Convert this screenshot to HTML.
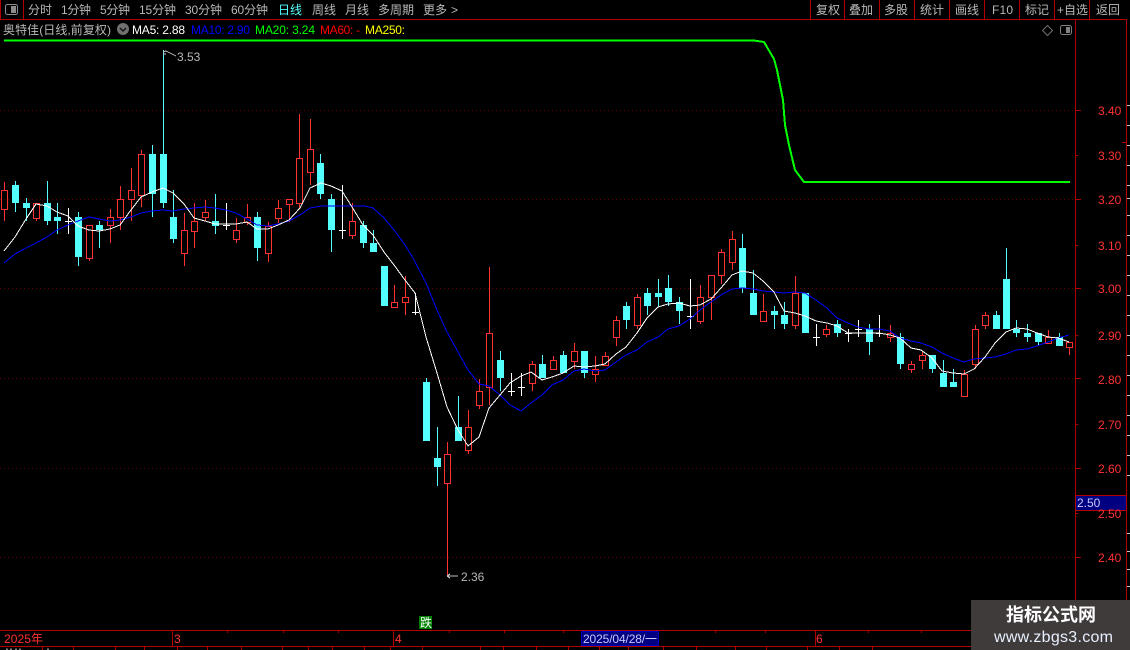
<!DOCTYPE html>
<html lang="zh"><head><meta charset="utf-8"><title>奥特佳</title>
<style>
html,body{margin:0;padding:0;background:#000;width:1130px;height:650px;overflow:hidden}
svg{display:block;position:absolute;left:0;top:0}
text{font:12px "Liberation Sans","Noto Sans CJK SC",sans-serif}
.n{fill:#b8b8b8}.l{fill:#ff3232}
</style></head><body>
<svg width="1130" height="650" viewBox="0 0 1130 650" xmlns="http://www.w3.org/2000/svg">
<rect width="1130" height="650" fill="#000"/>
<g shape-rendering="crispEdges" fill="none">
<path stroke="#640000" stroke-dasharray="1 3" d="M0 110.500H1075M0 199.500H1075M0 288.500H1075M0 378.500H1075M0 468.500H1075M0 557.500H1075"/>
<path stroke="#b00000" d="M0 19.500H1126M.5 0V19M23.500 0V19M810.500 0V19M844.500 0V19M879.500 0V19M914.500 0V19M949.500 0V19M984.500 0V19M1019.500 0V19M1054.500 0V19M1089.500 0V19M1075.500 19V630M1126.500 19V630M0 630.500H1130M0 646.500H1130M172.500 630V646M393.500 630V646M815.500 630V646
M1075 110.500h6M1075 155.500h3M1075 199.500h6M1075 245.500h3M1075 288.500h6M1075 335.500h3M1075 378.500h6M1075 424.500h3M1075 468.500h6M1075 513.500h3M1075 557.500h6M1122 142.500h4
M227.500 630v3M283.500 630v3M338.500 630v3M449.500 630v3M504.500 630v3M563.500 630v3M715.500 630v3M765.500 630v3M868.500 630v3M921.500 630v3
M42.500 647v3M73.500 647v3M115.500 647v3M144.500 647v3M177.500 647v3M207.500 647v3M241.500 647v3M282.500 647v3M308.500 647v3M332.500 647v3M364.500 647v3M390.500 647v3M422.500 647v3M480.500 647v3M503.500 647v3M536.500 647v3M568.500 647v3M599.500 647v3M628.500 647v3M663.500 647v3M696.500 647v3M735.500 647v3M766.500 647v3M807.500 647v3M839.500 647v3M872.500 647v3"/>
<path stroke="#c8c8c8" d="M1127 105.500h3M1127 125.500h3M1127 145.500h3M1127 165.500h3M1127 185.500h3M1127 198.500h3M1127 215.500h3M1127 235.500h3M1127 255.500h3M1127 275.500h3M1127 295.500h3M1127 315.500h3M1127 335.500h3M1127 355.500h3M1127 375.500h3M1127 395.500h3M1127 415.500h3M1127 435.500h3M1127 455.500h3M1127 475.500h3M1127 533.500h3M1127 551.500h3M1127 569.500h3M1127 586.500h3"/>
<path stroke="#ff3232" d="M4.500 182V190M4.500 209V221M1.500 190.500h6v19h-6z
M36.500 203V203M36.500 218V221M33.500 203.500h6v15h-6z
M110.500 209V217M110.500 225V243M107.500 217.500h6v8h-6z
M120.500 186V199M120.500 217V230M117.500 199.500h6v18h-6z
M131.500 168V190M131.500 199V221M128.500 190.500h6v9h-6z
M141.500 150V154M141.500 195V207M138.500 154.500h6v41h-6z
M89.500 258V261M86.500 225.500h6v33h-6z
M184.500 213V230M184.500 253V266M181.500 230.500h6v23h-6z
M194.500 203V221M194.500 231V248M191.500 221.500h6v10h-6z
M205.500 200V212M205.500 217V221M202.500 212.500h6v5h-6z
M236.500 218V230M236.500 239V243M233.500 230.500h6v9h-6z
M247.500 204V217M247.500 222V225M244.500 217.500h6v5h-6z
M268.500 222V226M268.500 253V262M265.500 226.500h6v27h-6z
M278.500 200V208M278.500 218V223M275.500 208.500h6v10h-6z
M289.500 204V222M286.500 199.500h6v5h-6z
M299.500 114V158M299.500 203V208M296.500 158.500h6v45h-6z
M310.500 119V149M310.500 172V185M307.500 149.500h6v23h-6z
M352.500 203V221M352.500 235V239M349.500 221.500h6v14h-6z
M394.500 285V302M391.500 302.500h6v5h-6z
M405.500 276V297M405.500 302V315M402.500 297.500h6v5h-6z
M447.500 442V454M447.500 483V576M444.500 454.500h6v29h-6z
M468.500 410V427M468.500 450V454M465.500 427.500h6v23h-6z
M479.500 379V391M479.500 405V409M476.500 391.500h6v14h-6z
M489.500 267V333M489.500 387V405M486.500 333.500h6v54h-6z
M532.500 361V364M532.500 383V391M529.500 364.500h6v19h-6z
M553.500 356V360M550.500 360.500h6v9h-6z
M574.500 343V351M574.500 361V369M571.500 351.500h6v10h-6z
M595.500 356V369M595.500 374V382M592.500 369.500h6v5h-6z
M605.500 352V356M602.500 356.500h6v9h-6z
M616.500 316V320M616.500 337V346M613.500 320.500h6v17h-6z
M637.500 294V297M637.500 325V329M634.500 297.500h6v28h-6z
M700.500 285V297M700.500 321V324M697.500 297.500h6v24h-6z
M711.500 297V320M708.500 275.500h6v22h-6z
M721.500 249V252M721.500 275V284M718.500 252.500h6v23h-6z
M732.500 231V239M732.500 262V270M729.500 239.500h6v23h-6z
M763.500 294V311M760.500 311.500h6v10h-6z
M795.500 276V293M795.500 325V329M792.500 293.500h6v32h-6z
M826.500 325V329M826.500 334V337M823.500 329.500h6v5h-6z
M890.500 325V333M890.500 337V342M887.500 333.500h6v4h-6z
M911.500 361V364M911.500 369V373M908.500 364.500h6v5h-6z
M922.500 351V355M922.500 360V369M919.500 355.500h6v5h-6z
M964.500 370V374M961.500 374.500h6v22h-6z
M975.500 325V329M975.500 364V369M972.500 329.500h6v35h-6z
M985.500 312V315M985.500 325V329M982.500 315.500h6v10h-6z
M1048.500 330V337M1045.500 337.500h6v6h-6z
M1069.500 347V355M1066.500 342.500h6v5h-6z"/>
<path stroke="#54ffff" d="M15.500 181V212M26.500 198V221M47.500 181V225M57.500 203V234M78.500 212V266M99.500 221V248M152.500 145V217M163.500 50V208M173.500 190V243M215.500 194V234M257.500 212V261M320.500 154V199M331.500 194V252M363.500 221V248M373.500 230V252M426.500 378V441M437.500 427V486M458.500 396V441M500.500 351V391M542.500 355V378M563.500 351V373M584.500 351V378M626.500 302V329M647.500 288V315M658.500 279V306M668.500 275V306M679.500 297V324M742.500 234V293M753.500 270V315M774.500 306V329M784.500 302V329M805.500 293V333M837.500 320V337M869.500 324V355M900.500 333V369M932.500 355V373M943.500 360V387M953.500 369V387M996.500 311V329M1006.500 248V329M1016.500 320V337M1027.500 324V342M1038.500 333V346M1059.500 333V346"/>
<path stroke="#54ffff" stroke-width="7" d="M15.500 185V203M26.500 203V208M47.500 203V221M57.500 217V221M78.500 217V257M99.500 225V230M152.500 154V194M163.500 154V203M173.500 217V239M215.500 221V226M257.500 217V248M320.500 163V194M331.500 199V230M363.500 225V243M373.500 243V252M384.500 266V306M426.500 382V441M437.500 458V467M458.500 427V441M500.500 360V378M542.500 364V378M563.500 355V373M584.500 351V373M626.500 306V320M647.500 293V306M658.500 293V297M668.500 288V302M679.500 302V311M742.500 248V288M753.500 293V315M774.500 311V315M784.500 315V324M805.500 293V333M837.500 324V333M869.500 329V342M900.500 337V364M932.500 355V369M943.500 373V387M953.500 382V387M996.500 315V329M1006.500 279V329M1016.500 329V333M1027.500 333V337M1038.500 333V342M1059.500 337V346"/>
<path stroke="#fff" d="M68.500 208V234M65 221.500h7M226.500 203V230M223 225.500h7M342.500 185V239M339 230.500h7M415.500 293V315M412 312.500h7M511.500 373V396M508 391.500h7M521.500 373V396M518 387.500h7M690.500 279V329M687 316.500h7M816.500 324V346M813 337.500h7M848.500 329V342M845 333.500h7M858.500 320V337M855 329.500h7M879.500 315V337M876 333.500h7"/>
<path stroke="#00f" d="M4 263L15 254L26 248L36 243L47 237L57 230L68 225L78 221L89 217L99 219L110 221L120 220L131 217L141 213L152 211L163 210L173 211L184 209L194 208L205 207L215 208L226 210L236 213L247 219L257 225L268 226L278 224L289 221L300 215L310 208L321 206L331 206L342 206L352 206L365 206L373 208L384 218L394 230L405 245L413 258L426 283L437 310L447 332L458 352L468 370L479 384L489 386L500 395L510 405L521 411L531 403L542 395L552 385L563 380L574 371L584 369L595 371L605 370L616 362L626 355L637 350L647 342L658 337L668 329L679 326L690 319L700 310L711 302L721 295L732 289L742 288L753 289L763 291L774 292L784 293L795 292L805 293L816 300L827 308L837 318L848 323L858 327L869 329L879 329L890 331L900 338L911 341L921 343L932 347L942 353L953 358L964 362L974 359L985 358L995 357L1006 354L1016 350L1027 349L1037 346L1048 342L1058 338L1069 335"/>
<path stroke="#fff" d="M4 251L15 237L26 219L36 204L47 206L57 212L68 216L78 226L89 230L99 231L110 229L120 225L131 210L141 197L152 192L163 188L173 193L184 204L194 218L205 221L215 224L226 224L236 224L247 222L257 229L268 229L278 225L289 220L300 208L310 188L321 183L331 186L342 191L352 207L363 225L373 235L384 252L394 265L405 280L415 293L426 337L437 373L447 407L458 430L468 446L479 437L489 408L500 395L510 383L521 376L531 372L542 380L552 377L563 373L574 366L584 367L595 366L605 364L616 354L626 347L637 333L647 318L658 307L668 304L679 303L690 306L700 305L711 299L721 288L732 275L742 271L753 273L763 281L774 292L784 311L795 313L805 316L816 321L827 323L837 326L848 333L858 333L869 333L879 333L890 335L900 338L911 348L921 350L932 358L942 371L953 373L964 374L974 369L985 357L995 343L1006 332L1016 328L1027 329L1037 333L1048 337L1058 338L1069 342"/>
<path stroke="#0f0" stroke-width="2" d="M4 40.500H754L764 42L774 59L777 70L783 100L785 125L789 145L795 170L804 182H1070"/>
<path stroke="#c0c0c0" d="M163 52l3-1 10 5M163 54h3M447 576h11M447 576l3-2M447 576l3 2"/>
<rect x="581.500" y="631.500" width="77" height="14" fill="#000080" stroke="#0000c0"/>
<rect x="1076" y="496" width="50" height="14.500" fill="#000080"/>
<path stroke="#b00000" d="M1076 495.500H1126M1076 510.500H1126"/>
<rect x="419" y="616" width="13" height="13" fill="#008000"/>
<path stroke="#fff" d="M7 648.500v2M11 648.500v2M16 648.500v2M20 648.500v2M48 648.500v2"/>
</g>

<g fill="none" stroke="#8c8c8c">
<rect x="5.500" y="4.500" width="12" height="10" rx="2"/>
<rect x="11" y="6" width="5" height="7" fill="#8c8c8c" stroke="none"/>
<path d="M1047.500 25.500l5 5-5 5-5-5z" stroke="#707070"/>
<rect x="1060.500" y="25.500" width="11" height="9" rx="2" stroke="#808080"/>
<rect x="1066" y="27" width="4" height="6" fill="#808080" stroke="none"/>
</g>
<circle cx="123" cy="29" r="6" fill="#707070"/>
<path d="M120 28l3 3 3-3" fill="none" stroke="#111" stroke-width="1.400"/>

<g class="n">
<text x="28" y="14" class="n">分时</text>
<text x="61" y="14" class="n" textLength="30">1分钟</text>
<text x="100" y="14" class="n" textLength="30">5分钟</text>
<text x="139" y="14" class="n" textLength="37">15分钟</text>
<text x="185" y="14" class="n" textLength="37">30分钟</text>
<text x="231" y="14" class="n" textLength="37">60分钟</text>
<text x="278" y="14" fill="#54ffff">日线</text>
<text x="312" y="14" class="n">周线</text>
<text x="345" y="14" class="n">月线</text>
<text x="378" y="14" class="n">多周期</text>
<text x="423" y="14" class="n">更多</text>
<text x="451" y="14" class="n">&gt;</text>
<text x="816" y="14" class="n">复权</text>
<text x="849" y="14" class="n">叠加</text>
<text x="884" y="14" class="n">多股</text>
<text x="920" y="14" class="n">统计</text>
<text x="955" y="14" class="n">画线</text>
<text x="992" y="14" class="n" textLength="21">F10</text>
<text x="1025" y="14" class="n">标记</text>
<text x="1057" y="14" class="n" textLength="31">+自选</text>
<text x="1096" y="14" class="n">返回</text>
<text x="3" y="34" class="n" textLength="108">奥特佳(日线,前复权)</text>
</g>
<text x="132" y="34" fill="#fff" textLength="53">MA5: 2.88</text>
<text x="191" y="34" fill="#00f" textLength="59">MA10: 2.90</text>
<text x="255" y="34" fill="#0f0" textLength="60">MA20: 3.24</text>
<text x="320" y="34" fill="#f00" textLength="40">MA60: -</text>
<text x="365" y="34" fill="#ff0" textLength="40">MA250:</text>
<text x="177" y="61" class="n">3.53</text>
<text x="461" y="581" class="n">2.36</text>
<text x="1098" y="115" class="l">3.40</text>
<text x="1098" y="160" class="l">3.30</text>
<text x="1098" y="204" class="l">3.20</text>
<text x="1098" y="250" class="l">3.10</text>
<text x="1098" y="293" class="l">3.00</text>
<text x="1098" y="340" class="l">2.90</text>
<text x="1098" y="384" class="l">2.80</text>
<text x="1098" y="429" class="l">2.70</text>
<text x="1098" y="473" class="l">2.60</text>
<text x="1098" y="518" class="l">2.50</text>
<text x="1098" y="562" class="l">2.40</text>
<text x="1077" y="507" fill="#c8c8ff">2.50</text>
<text x="4" y="643" class="l" textLength="39">2025年</text>
<text x="174" y="643" class="l">3</text>
<text x="395" y="643" class="l">4</text>
<text x="816" y="643" class="l">6</text>
<text x="583" y="643" fill="#c8c8ff" textLength="74">2025/04/28/一</text>
<text x="420" y="627" fill="#fff" font-weight="bold">跌</text>

<rect x="971" y="600" width="159" height="50" fill="#3f3b3b"/>
<text x="1006" y="621" fill="#fff" style="font-size:18px;font-weight:bold">指标公式网</text>
<text x="994" y="642" fill="#e8f0ff" style="font-size:16px" textLength="119">www.zbgs3.com</text>
</svg>
</body></html>
